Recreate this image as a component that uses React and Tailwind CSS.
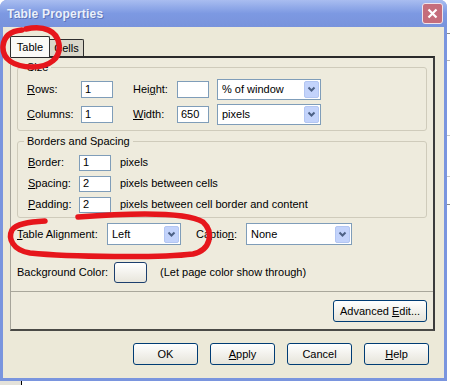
import { useState } from 'react';

function Chevron() {
  return (
    <span className="w-[15px] h-[17px] mr-[1px] rounded-[2px] bg-[#C3D3FB] border border-[#B3C6F2] flex items-center justify-center">
      <svg width="9" height="7" viewBox="0 0 9 7">
        <path d="M1.5 1.5 L4.5 4.5 L7.5 1.5" fill="none" stroke="#4D6185" strokeWidth="2" />
      </svg>
    </span>
  );
}

function Select({ value, className }) {
  return (
    <div className={`h-[21px] border border-[#7F9DB9] bg-white flex items-center justify-between pl-[4px] ${className}`}>
      <span>{value}</span>
      <Chevron />
    </div>
  );
}

function Field({ value, className = 'w-[32px] h-[17px]' }) {
  return <div className={`border border-[#7F9DB9] bg-white flex items-center pl-[3px] ${className}`}>{value}</div>;
}

function Button({ children, className = 'w-[65px]' }) {
  return (
    <div className={`h-[22px] rounded-[3px] border border-[#003C74] bg-gradient-to-b from-white to-[#E6E4DA] flex items-center justify-center ${className}`}>
      <span>{children}</span>
    </div>
  );
}

function Group({ title, className, children }) {
  return (
    <div className={`relative ml-[6px] w-[410px] border border-[#CFCBBB] rounded-[3px] ${className}`}>
      <span className="absolute -top-[8px] left-[6px] px-[3px] bg-[#EEEBDD] leading-[14px]">{title}</span>
      {children}
    </div>
  );
}

export default function App() {
  const [tab] = useState('Table');

  return (
    <div className="relative w-[450px] h-[385px] overflow-hidden bg-white font-['Liberation_Sans',Arial,sans-serif] text-[11px] text-black flex flex-col">
      <div className="flex h-[381px]">
        {/* Dialog */}
        <div className="w-[447px] h-full rounded-t-[7px] bg-[#7A95DE] flex flex-col">
          <div className="h-[27px] rounded-t-[7px] bg-gradient-to-b from-[#A9BDF0] via-[#7D99E2] to-[#7893DC] flex items-center justify-between pl-[7px] pr-[4px]">
            <span className="font-bold text-[12px] tracking-[0.2px] text-[#EAF0FB] [text-shadow:1px_1px_0_#5C74B8]">Table Properties</span>
            <div className="w-[21px] h-[21px] rounded-[3px] border border-[#F0E4EA] bg-[#C56D7B] flex items-center justify-center">
              <svg width="11" height="11" viewBox="0 0 11 11">
                <path d="M1.5 1.5 L9.5 9.5 M9.5 1.5 L1.5 9.5" stroke="white" strokeWidth="2.2" />
              </svg>
            </div>
          </div>

          <div className="flex-1 mx-[3px] mb-[3px] bg-[#ECE9D8] flex flex-col">
            {/* Tabs */}
            <div className="mt-[9px] h-[20px] pl-[7px] flex items-end">
              <div className={`relative z-10 -mb-[1px] h-[21px] w-[40px] border border-b-0 border-[#2E2E2E] rounded-t-[2px] flex items-center justify-center ${tab === 'Table' ? 'bg-[#FAFAF7]' : ''}`}>
                Table
              </div>
              <div className="h-[17px] w-[34px] border border-b-0 border-l-0 border-[#2E2E2E] rounded-tr-[2px] bg-[#DAD7CA] flex items-center justify-center">
                Cells
              </div>
            </div>

            {/* Panel */}
            <div className="ml-[7px] w-[425px] h-[275px] bg-[#EEEBDD] border-t-2 border-r-2 border-b-2 border-l border-t-[#2A2A2A] border-r-[#3C3C3C] border-b-[#4A4A46] border-l-[#A6A49A] flex flex-col">
              <Group title="Size" className="mt-[9px] h-[64px] pt-[9px] pl-[9px]">
                <div className="h-[25px] flex items-center">
                  <span className="w-[54px]"><u>R</u>ows:</span>
                  <Field value="1" />
                  <span className="ml-[20px] w-[44px]">Hei<u>g</u>ht:</span>
                  <Field value="" />
                  <Select value="% of window" className="ml-[8px] w-[104px]" />
                </div>
                <div className="h-[25px] flex items-center">
                  <span className="w-[54px]"><u>C</u>olumns:</span>
                  <Field value="1" />
                  <span className="ml-[20px] w-[44px]"><u>W</u>idth:</span>
                  <Field value="650" />
                  <Select value="pixels" className="ml-[8px] w-[104px]" />
                </div>
              </Group>

              <Group title="Borders and Spacing" className="mt-[10px] h-[77px] pt-[10px] pl-[10px]">
                <div className="h-[21px] flex items-center">
                  <span className="w-[51px]"><u>B</u>order:</span>
                  <Field value="1" className="w-[32px] h-[16px]" />
                  <span className="ml-[9px]">pixels</span>
                </div>
                <div className="h-[21px] flex items-center">
                  <span className="w-[51px]"><u>S</u>pacing:</span>
                  <Field value="2" className="w-[32px] h-[16px]" />
                  <span className="ml-[9px]">pixels between cells</span>
                </div>
                <div className="h-[21px] flex items-center">
                  <span className="w-[51px]"><u>P</u>adding:</span>
                  <Field value="2" className="w-[32px] h-[16px]" />
                  <span className="ml-[9px]">pixels between cell border and content</span>
                </div>
              </Group>

              <div className="mt-[5px] pl-[6px] h-[22px] flex items-center">
                <span className="w-[90px]"><u>T</u>able Alignment:</span>
                <Select value="Left" className="w-[74px] h-[22px]" />
                <span className="ml-[15px] w-[50px]">Captio<u>n</u>:</span>
                <Select value="None" className="w-[106px] h-[22px]" />
              </div>

              <div className="mt-[17px] pl-[6px] h-[21px] flex items-center">
                <span className="w-[97px]">Background Color:</span>
                <div className="w-[33px] h-[21px] rounded-[3px] border border-[#1C3F6E] bg-gradient-to-b from-white to-[#E8E6DC]" />
                <span className="ml-[13px]">(Let page color show through)</span>
              </div>

              <div className="mt-[8px] h-px bg-[#A9A79B]" />

              <Button className="mt-[8px] mr-[6px] self-end w-[94px]">Advanced <u>E</u>dit...</Button>
            </div>

            {/* Dialog buttons */}
            <div className="mt-[12px] pr-[15px] flex justify-end gap-[12px]">
              <Button>OK</Button>
              <Button><u>A</u>pply</Button>
              <Button>Cancel</Button>
              <Button><u>H</u>elp</Button>
            </div>
          </div>
        </div>

        {/* window behind, right edge */}
        <div className="flex-1 flex flex-col bg-white">
          <div className="mt-[33px] h-px bg-[#8A8A8A]" />
          <div className="mt-[26px] h-px bg-[#B5B5B5]" />
          <div className="mt-[74px] h-px bg-[#C8C8C8]" />
          <div className="mt-[40px] h-px bg-[#C8C8C8]" />
          <div className="mt-[27px] h-px bg-[#8A8A8A]" />
        </div>
      </div>

      {/* window behind, bottom edge */}
      <div className="flex-1 flex">
        <div className="w-[22px] bg-[#E4E2DA] border-r border-black" />
      </div>

      {/* red marker annotations */}
      <svg className="absolute inset-0 pointer-events-none" width="450" height="385" viewBox="0 0 450 385">
        <path
          d="M26 29 C44 25 57 31 59 44 C61 58 50 67 32 67 C14 67 2 59 3 46 C4 36 11 31 22 30"
          fill="none" stroke="#E6161C" strokeWidth="5.5" strokeLinecap="round"
        />
        <path
          d="M78 217 C130 213 185 211 203 222 C214 232 211 250 193 254 C160 258 70 257 30 253 C12 250 8 238 12 230 C16 224 28 222 45 221"
          fill="none" stroke="#E6161C" strokeWidth="5.5" strokeLinecap="round"
        />
      </svg>
    </div>
  );
}
